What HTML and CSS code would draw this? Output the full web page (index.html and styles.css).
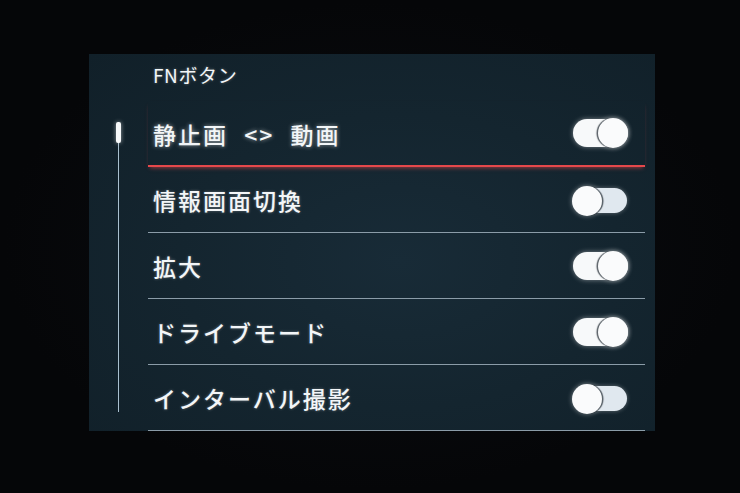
FILE: index.html
```html
<!DOCTYPE html>
<html lang="ja">
<head>
<meta charset="utf-8">
<link rel="stylesheet" href="styles.css">
</head>
<body>
<div class="bezel">
  <div class="screen">
    <div class="scroll">
      <div class="track"></div>
      <div class="thumb"></div>
    </div>
    <div class="menu">
      <div class="title">FNボタン</div>
      <div class="row selected">
        <span class="label">静止画 &lt;&gt; 動画</span>
        <span class="toggle on"><span class="knob"></span></span>
      </div>
      <div class="row">
        <span class="label">情報画面切換</span>
        <span class="toggle off"><span class="knob"></span></span>
      </div>
      <div class="row">
        <span class="label">拡大</span>
        <span class="toggle on"><span class="knob"></span></span>
      </div>
      <div class="row">
        <span class="label">ドライブモード</span>
        <span class="toggle on"><span class="knob"></span></span>
      </div>
      <div class="row">
        <span class="label">インターバル撮影</span>
        <span class="toggle off"><span class="knob"></span></span>
      </div>
    </div>
  </div>
</div>
</body>
</html>
```
FILE: styles.css
```css
html, body {
  margin: 0;
  padding: 0;
  background: #050608;
}
.bezel {
  width: 740px;
  height: 493px;
  background: radial-gradient(ellipse at 50% 50%, #0b0d11 0%, #050608 70%);
  padding: 54px 0 0 89px;
  box-sizing: border-box;
}
.screen {
  width: 566px;
  height: 377px;
  background: radial-gradient(ellipse at 55% 55%, #182b37 0%, #14252f 50%, #112029 100%);
  display: grid;
  grid-template-columns: 59px 497px;
  font-family: "Noto Sans CJK JP", "Noto Sans", sans-serif;
  color: #f3f6f8;
  overflow: hidden;
}
.scroll {
  position: relative;
}
.track {
  position: absolute;
  left: 29px;
  top: 80px;
  width: 1px;
  height: 278px;
  background: #a9c0cf;
}
.thumb {
  position: absolute;
  left: 27px;
  top: 68px;
  width: 5px;
  height: 21px;
  border-radius: 2px;
  background: #f7f9fa;
  box-shadow: 0 0 4px rgba(255, 255, 255, 0.55);
}
.menu {
  display: flex;
  flex-direction: column;
}
.title {
  height: 47px;
  box-sizing: border-box;
  padding: 7px 0 0 5px;
  font-size: 19px;
  font-weight: 400;
  letter-spacing: 0.6px;
  line-height: 28px;
  text-shadow: 0 0 3px rgba(255, 255, 255, 0.35);
}
.row {
  height: 66px;
  box-sizing: border-box;
  border-bottom: 1px solid #8b9ca8;
  display: flex;
  align-items: center;
  justify-content: space-between;
  padding: 0 17px 0 5px;
}
.row.selected {
  border-bottom: 2px solid #e5484b;
  box-shadow: 0 3px 4px -2px rgba(229, 72, 75, 0.6);
}
.label {
  font-size: 23px;
  font-weight: 500;
  letter-spacing: 2px;
  text-shadow: 0 0 3px rgba(255, 255, 255, 0.35);
  padding-top: 1px;
}
.selected .label {
  word-spacing: 9px;
  text-shadow: 0 0 4px rgba(255, 255, 255, 0.6);
}
.toggle {
  position: relative;
  width: 55px;
  height: 28px;
  display: flex;
  align-items: center;
}
.toggle.on::before {
  content: "";
  position: absolute;
  left: 0;
  right: 0;
  top: 0;
  bottom: 0;
  border-radius: 14px;
  background: #f7f9fa;
  box-shadow: 0 0 5px rgba(255, 255, 255, 0.45);
}
.toggle.off::before {
  content: "";
  position: absolute;
  left: 2px;
  right: 1px;
  top: 2px;
  bottom: 1px;
  border-radius: 13px;
  background: #e0e8ef;
  box-shadow: 0 0 4px rgba(255, 255, 255, 0.35);
}
.knob {
  position: absolute;
  top: -1px;
  width: 30px;
  height: 30px;
  border-radius: 50%;
  background: #fafbfc;
}
.on .knob {
  right: 0;
  box-shadow: -1.5px 0 1px rgba(20, 30, 38, 0.7), 0 0 5px rgba(255, 255, 255, 0.45);
}
.off .knob {
  left: -1px;
  top: 0;
  box-shadow: 1.5px 0 1px rgba(20, 30, 38, 0.7), 0 0 5px rgba(255, 255, 255, 0.45);
}
```
